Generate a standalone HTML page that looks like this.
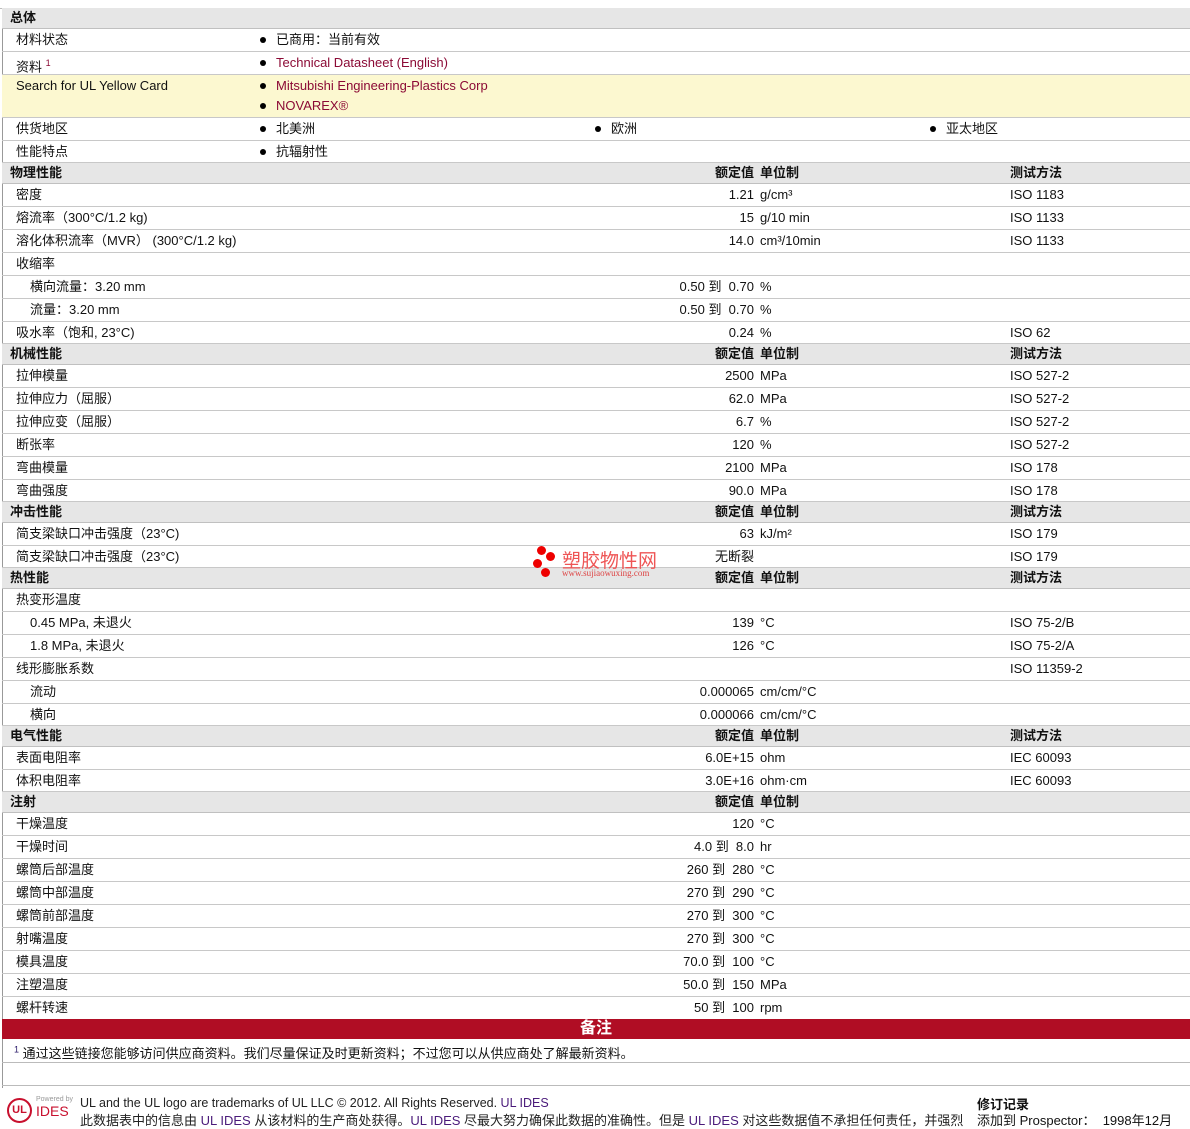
<!DOCTYPE html>
<html><head><meta charset="utf-8"><style>
*{margin:0;padding:0;box-sizing:border-box}
body{width:1190px;height:1125px;background:#fff;font-family:"Liberation Sans","Noto Sans CJK SC",sans-serif;font-size:13px;color:#111;position:relative;overflow:hidden}
.r{position:absolute;left:2px;right:0;border-bottom:1px solid #c8c8c8}
.h{background:#e6e6e6;font-weight:bold;border-bottom:1px solid #c0c0c0}
.t{position:absolute;white-space:nowrap}
.v{position:absolute;right:436px;white-space:nowrap;text-align:right}
.u{position:absolute;left:758px;white-space:nowrap}
.m{position:absolute;left:1008px;white-space:nowrap}
.b{position:absolute;white-space:nowrap}
.b:before{content:"";display:inline-block;width:6px;height:6px;border-radius:50%;background:#000;margin-right:10px;vertical-align:1px}
a{color:#8b0a35;text-decoration:none}
#lb{position:absolute;left:2px;top:8px;width:1px;height:1080px;background:#999}
</style></head><body>
<div id="lb"></div>
<div style="position:absolute;left:0;right:0;top:8px;border-top:1px solid #bbb"></div>

<div class="r h" style="top:8px;height:21px;line-height:20px"><span class="t" style="left:8px">总体</span></div>
<div class="r" style="top:29px;height:23px;line-height:22px"><span class="t" style="left:14px">材料状态</span><span class="b" style="left:258px">已商用：当前有效</span></div>
<div class="r" style="top:52px;height:23px;line-height:22px"><span class="t" style="left:14px">资料 <sup style="font-size:9px;color:#8b0a35">1</sup></span><span class="b" style="left:258px"><a>Technical Datasheet (English)</a></span></div>
<div class="r" style="top:75px;height:43px;background:#fcf8d0;line-height:20px"><span class="t" style="left:14px;top:1px">Search for UL Yellow Card</span><span class="b" style="left:258px;top:1px"><a>Mitsubishi Engineering-Plastics Corp</a></span><span class="b" style="left:258px;top:21px"><a>NOVAREX®</a></span></div>
<div class="r" style="top:118px;height:23px;line-height:22px"><span class="t" style="left:14px">供货地区</span><span class="b" style="left:258px">北美洲</span><span class="b" style="left:593px">欧洲</span><span class="b" style="left:928px">亚太地区</span></div>
<div class="r" style="top:141px;height:22px;line-height:22px"><span class="t" style="left:14px">性能特点</span><span class="b" style="left:258px">抗辐射性</span></div>

<div class="r h" style="top:163px;height:21px;line-height:19px"><span class="t" style="left:8px">物理性能</span><span class="v">额定值</span><span class="u">单位制</span><span class="m">测试方法</span></div>
<div class="r" style="top:184px;height:23px;line-height:22px"><span class="t" style="left:14px">密度</span><span class="v">1.21</span><span class="u">g/cm³</span><span class="m">ISO 1183</span></div>
<div class="r" style="top:207px;height:23px;line-height:22px"><span class="t" style="left:14px">熔流率（300°C/1.2 kg)</span><span class="v">15</span><span class="u">g/10 min</span><span class="m">ISO 1133</span></div>
<div class="r" style="top:230px;height:23px;line-height:22px"><span class="t" style="left:14px">溶化体积流率（MVR） (300°C/1.2 kg)</span><span class="v">14.0</span><span class="u">cm³/10min</span><span class="m">ISO 1133</span></div>
<div class="r" style="top:253px;height:23px;line-height:22px"><span class="t" style="left:14px">收缩率</span></div>
<div class="r" style="top:276px;height:23px;line-height:22px"><span class="t" style="left:28px">横向流量：3.20 mm</span><span class="v">0.50 到&nbsp; 0.70</span><span class="u">%</span></div>
<div class="r" style="top:299px;height:23px;line-height:22px"><span class="t" style="left:28px">流量：3.20 mm</span><span class="v">0.50 到&nbsp; 0.70</span><span class="u">%</span></div>
<div class="r" style="top:322px;height:22px;line-height:22px"><span class="t" style="left:14px">吸水率（饱和, 23°C)</span><span class="v">0.24</span><span class="u">%</span><span class="m">ISO 62</span></div>

<div class="r h" style="top:344px;height:21px;line-height:19px"><span class="t" style="left:8px">机械性能</span><span class="v">额定值</span><span class="u">单位制</span><span class="m">测试方法</span></div>
<div class="r" style="top:365px;height:23px;line-height:22px"><span class="t" style="left:14px">拉伸模量</span><span class="v">2500</span><span class="u">MPa</span><span class="m">ISO 527-2</span></div>
<div class="r" style="top:388px;height:23px;line-height:22px"><span class="t" style="left:14px">拉伸应力（屈服）</span><span class="v">62.0</span><span class="u">MPa</span><span class="m">ISO 527-2</span></div>
<div class="r" style="top:411px;height:23px;line-height:22px"><span class="t" style="left:14px">拉伸应变（屈服）</span><span class="v">6.7</span><span class="u">%</span><span class="m">ISO 527-2</span></div>
<div class="r" style="top:434px;height:23px;line-height:22px"><span class="t" style="left:14px">断张率</span><span class="v">120</span><span class="u">%</span><span class="m">ISO 527-2</span></div>
<div class="r" style="top:457px;height:23px;line-height:22px"><span class="t" style="left:14px">弯曲模量</span><span class="v">2100</span><span class="u">MPa</span><span class="m">ISO 178</span></div>
<div class="r" style="top:480px;height:22px;line-height:22px"><span class="t" style="left:14px">弯曲强度</span><span class="v">90.0</span><span class="u">MPa</span><span class="m">ISO 178</span></div>

<div class="r h" style="top:502px;height:21px;line-height:19px"><span class="t" style="left:8px">冲击性能</span><span class="v">额定值</span><span class="u">单位制</span><span class="m">测试方法</span></div>
<div class="r" style="top:523px;height:23px;line-height:22px"><span class="t" style="left:14px">简支梁缺口冲击强度（23°C)</span><span class="v">63</span><span class="u">kJ/m²</span><span class="m">ISO 179</span></div>
<div class="r" style="top:546px;height:22px;line-height:22px"><span class="t" style="left:14px">简支梁缺口冲击强度（23°C)</span><span class="v">无断裂</span><span class="m">ISO 179</span></div>

<div class="r h" style="top:568px;height:21px;line-height:19px"><span class="t" style="left:8px">热性能</span><span class="v">额定值</span><span class="u">单位制</span><span class="m">测试方法</span></div>
<div class="r" style="top:589px;height:23px;line-height:21px"><span class="t" style="left:14px">热变形温度</span></div>
<div class="r" style="top:612px;height:23px;line-height:22px"><span class="t" style="left:28px">0.45 MPa, 未退火</span><span class="v">139</span><span class="u">°C</span><span class="m">ISO 75-2/B</span></div>
<div class="r" style="top:635px;height:23px;line-height:22px"><span class="t" style="left:28px">1.8 MPa, 未退火</span><span class="v">126</span><span class="u">°C</span><span class="m">ISO 75-2/A</span></div>
<div class="r" style="top:658px;height:23px;line-height:21px"><span class="t" style="left:14px">线形膨胀系数</span><span class="m">ISO 11359-2</span></div>
<div class="r" style="top:681px;height:23px;line-height:22px"><span class="t" style="left:28px">流动</span><span class="v">0.000065</span><span class="u">cm/cm/°C</span></div>
<div class="r" style="top:704px;height:22px;line-height:22px"><span class="t" style="left:28px">横向</span><span class="v">0.000066</span><span class="u">cm/cm/°C</span></div>

<div class="r h" style="top:726px;height:21px;line-height:19px"><span class="t" style="left:8px">电气性能</span><span class="v">额定值</span><span class="u">单位制</span><span class="m">测试方法</span></div>
<div class="r" style="top:747px;height:23px;line-height:22px"><span class="t" style="left:14px">表面电阻率</span><span class="v">6.0E+15</span><span class="u">ohm</span><span class="m">IEC 60093</span></div>
<div class="r" style="top:770px;height:22px;line-height:22px"><span class="t" style="left:14px">体积电阻率</span><span class="v">3.0E+16</span><span class="u">ohm·cm</span><span class="m">IEC 60093</span></div>

<div class="r h" style="top:792px;height:21px;line-height:19px"><span class="t" style="left:8px">注射</span><span class="v">额定值</span><span class="u">单位制</span></div>
<div class="r" style="top:813px;height:23px;line-height:22px"><span class="t" style="left:14px">干燥温度</span><span class="v">120</span><span class="u">°C</span></div>
<div class="r" style="top:836px;height:23px;line-height:22px"><span class="t" style="left:14px">干燥时间</span><span class="v">4.0 到&nbsp; 8.0</span><span class="u">hr</span></div>
<div class="r" style="top:859px;height:23px;line-height:22px"><span class="t" style="left:14px">螺筒后部温度</span><span class="v">260 到&nbsp; 280</span><span class="u">°C</span></div>
<div class="r" style="top:882px;height:23px;line-height:22px"><span class="t" style="left:14px">螺筒中部温度</span><span class="v">270 到&nbsp; 290</span><span class="u">°C</span></div>
<div class="r" style="top:905px;height:23px;line-height:22px"><span class="t" style="left:14px">螺筒前部温度</span><span class="v">270 到&nbsp; 300</span><span class="u">°C</span></div>
<div class="r" style="top:928px;height:23px;line-height:22px"><span class="t" style="left:14px">射嘴温度</span><span class="v">270 到&nbsp; 300</span><span class="u">°C</span></div>
<div class="r" style="top:951px;height:23px;line-height:22px"><span class="t" style="left:14px">模具温度</span><span class="v">70.0 到&nbsp; 100</span><span class="u">°C</span></div>
<div class="r" style="top:974px;height:23px;line-height:22px"><span class="t" style="left:14px">注塑温度</span><span class="v">50.0 到&nbsp; 150</span><span class="u">MPa</span></div>
<div class="r" style="top:997px;height:22px;line-height:22px;border:none"><span class="t" style="left:14px">螺杆转速</span><span class="v">50 到&nbsp; 100</span><span class="u">rpm</span></div>

<div style="position:absolute;left:2px;right:0;top:1019px;height:20px;background:#b00d24;color:#fff;text-align:center;font-size:16px;line-height:20px;font-weight:bold">备注</div>
<div style="position:absolute;left:14px;top:1043px;white-space:nowrap"><sup style="font-size:9px;color:#2a1a6a">1</sup> 通过这些链接您能够访问供应商资料。我们尽量保证及时更新资料；不过您可以从供应商处了解最新资料。</div>
<div style="position:absolute;left:2px;right:0;top:1062px;border-top:1px solid #bbb"></div>
<div style="position:absolute;left:2px;right:0;top:1085px;border-top:1px solid #bbb"></div>

<!-- watermark -->
<div style="position:absolute;left:533px;top:545px;width:140px;height:35px">
<div style="position:absolute;left:4px;top:1px;width:9px;height:9px;border-radius:50%;background:#e00"></div>
<div style="position:absolute;left:13px;top:7px;width:9px;height:9px;border-radius:50%;background:#e00"></div>
<div style="position:absolute;left:0px;top:14px;width:9px;height:9px;border-radius:50%;background:#e00"></div>
<div style="position:absolute;left:8px;top:23px;width:9px;height:9px;border-radius:50%;background:#e00"></div>
<div style="position:absolute;left:29px;top:1px;color:#e55;font-size:19px;white-space:nowrap">塑胶物性网</div>
<div style="position:absolute;left:29px;top:23px;color:#d44;font-size:9px;font-family:'Liberation Serif',serif;white-space:nowrap">www.sujiaowuxing.com</div>
</div>

<!-- footer -->
<div style="position:absolute;left:7px;top:1098px;width:25px;height:25px;border:2px solid #c8102e;border-radius:50%;color:#c8102e;font-size:11px;font-weight:bold;text-align:center;line-height:21px">UL</div>
<div style="position:absolute;left:36px;top:1096px;font-size:7px;color:#999">Powered by</div>
<div style="position:absolute;left:36px;top:1103px;font-size:14px;color:#c8102e">IDES</div>
<div style="position:absolute;left:80px;top:1096px;font-size:12.5px;white-space:nowrap;color:#222">UL and the UL logo are trademarks of UL LLC © 2012. All Rights Reserved. <a style="color:#4a1a7a">UL IDES</a></div>
<div style="position:absolute;left:80px;top:1110px;font-size:13px;white-space:nowrap;color:#222">此数据表中的信息由 <a style="color:#4a1a7a">UL IDES</a> 从该材料的生产商处获得。<a style="color:#4a1a7a">UL IDES</a> 尽最大努力确保此数据的准确性。但是 <a style="color:#4a1a7a">UL IDES</a> 对这些数据值不承担任何责任，并强烈</div>
<div style="position:absolute;left:977px;top:1094px;font-weight:bold;font-size:13px">修订记录</div>
<div style="position:absolute;left:977px;top:1110px;font-size:13px;white-space:nowrap">添加到 Prospector：&nbsp; 1998年12月</div>
</body></html>
